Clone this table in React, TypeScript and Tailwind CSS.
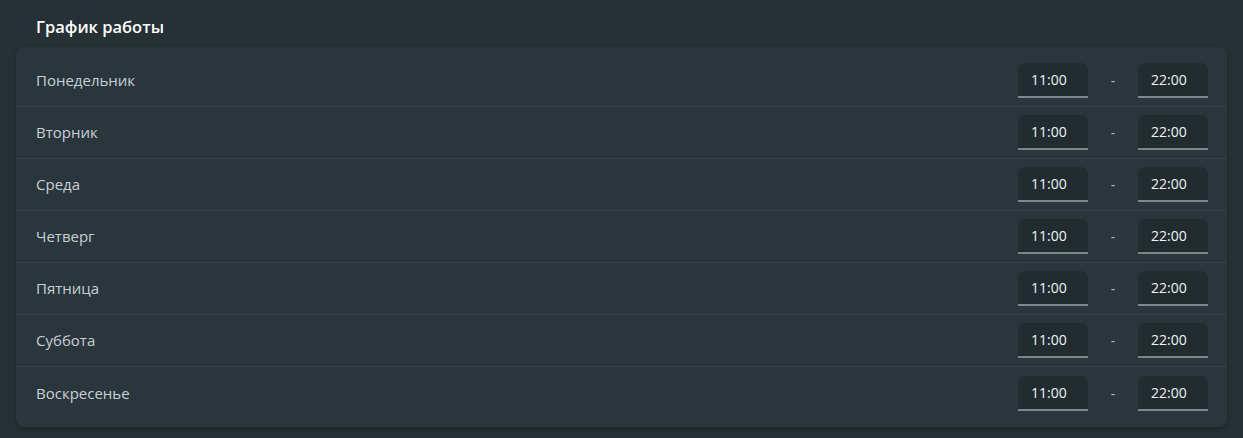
import React from 'react';

const days = ['Понедельник', 'Вторник', 'Среда', 'Четверг', 'Пятница', 'Суббота', 'Воскресенье'];

function TimeBox({ value }: { value: string }) {
  return (
    <div className="w-[70px] h-[35px] bg-[#222b30] rounded-t-[7px] border-b-2 border-[#7b878d] flex items-center pl-[13px] text-[14px] text-[#eef3f5]">
      {value}
    </div>
  );
}

export default function App() {
  return (
    <div className="min-h-[438px] bg-[#263035] px-4 pt-[14px] pb-3 font-['Open_Sans',sans-serif]">
      <h2 className="pl-5 text-[16.5px] font-semibold text-white leading-[26px] mb-[7px]">График работы</h2>

      <div className="bg-[#2b363c] rounded-lg pt-[8px] pb-[8px] shadow-[0_2px_4px_rgba(0,0,0,0.25)]">
        {days.map((day, i) => (
          <div
            key={day}
            className={`flex items-center h-[52px] pl-5 pr-[19px] ${i < days.length - 1 ? 'border-b border-[#344148]' : ''}`}
          >
            <span className="flex-1 text-[15px] text-[#c5d0d6]">{day}</span>
            <TimeBox value="11:00" />
            <span className="w-[50px] text-center text-[14px] text-[#aeb9bf]">-</span>
            <TimeBox value="22:00" />
          </div>
        ))}
      </div>
    </div>
  );
}
